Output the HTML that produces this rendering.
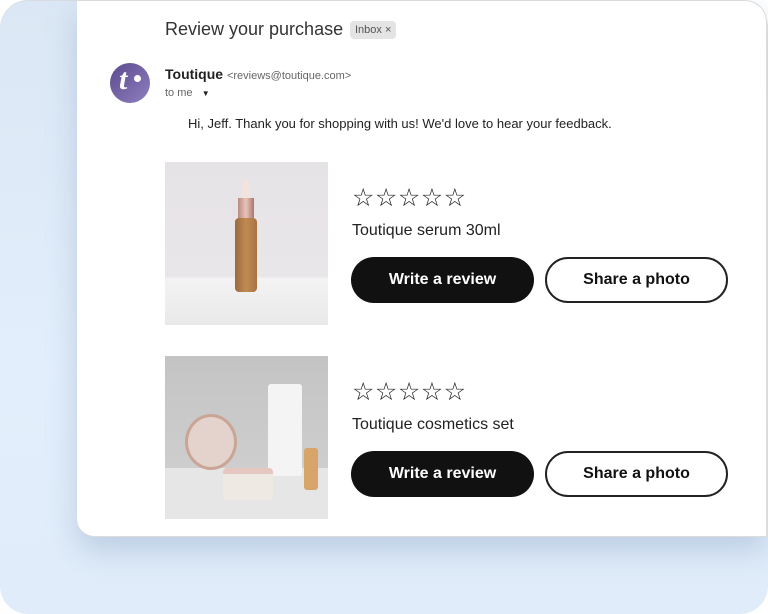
<!DOCTYPE html>
<html><head><style>
*{margin:0;padding:0;box-sizing:border-box}
body{width:768px;height:614px;background:#fff;position:relative;overflow:hidden;font-family:"Liberation Sans",sans-serif}
.bg{position:absolute;left:0;top:0;width:768px;height:614px;border-radius:28px;background:linear-gradient(180deg,#dbe7f4 0%,#e2eefb 60%,#e0ecf9 100%);border-top:1px solid #d8dde3}
.card{position:absolute;left:77px;top:0;width:690px;height:537px;background:#fff;border-radius:0 22px 0 18px;border:1px solid #dcdcdc;border-left:none;box-shadow:0 14px 30px rgba(120,150,190,.35)}
.t{position:absolute;white-space:nowrap}
.btn{position:absolute;height:46px;border-radius:23px;font-size:16px;font-weight:bold;display:flex;align-items:center;justify-content:center}
.bk{background:#111;color:#fff;width:183px}
.wh{background:#fff;color:#111;border:2px solid #222;width:183px}
.stars{position:absolute;font-size:25px;letter-spacing:0.5px;color:#222;font-family:"DejaVu Sans",sans-serif}
</style></head><body>
<div class="bg"></div>
<div class="card"></div>
<div class="t" style="left:165px;top:19px;font-size:18px;color:#333">Review your purchase</div>
<div class="t" style="left:350px;top:21px;height:18px;padding:0 5px;background:#e4e4e4;border-radius:4px;font-size:11px;color:#555;line-height:18px">Inbox&nbsp;×</div>
<div style="position:absolute;left:110px;top:63px;width:40px;height:40px;border-radius:50%;background:linear-gradient(135deg,#5b4a8c,#8f7fc0)"></div>
<div class="t" style="left:119px;top:63px;font-family:'Liberation Serif',serif;font-style:italic;font-weight:bold;color:#fff;font-size:30px">t</div>
<div style="position:absolute;left:134px;top:75px;width:7px;height:7px;border-radius:50%;background:#fff"></div>
<div class="t" style="left:165px;top:66px;font-size:14px;font-weight:bold;color:#222">Toutique <span style="font-weight:normal;font-size:11px;color:#666">&lt;reviews@toutique.com&gt;</span></div>
<div class="t" style="left:165px;top:87px;font-size:11px;color:#666">to me &nbsp;&nbsp;<span style="font-size:8px;color:#222">▼</span></div>
<div class="t" style="left:188px;top:116px;font-size:13px;color:#222">Hi, Jeff. Thank you for shopping with us! We'd love to hear your feedback.</div>

<div style="position:absolute;left:165px;top:162px;width:163px;height:163px;background:linear-gradient(180deg,#e6e3e6 0%,#e9e6e9 70%,#f3f2f3 72%,#e8e8e8 100%);overflow:hidden">
<div style="position:absolute;left:0;top:116px;width:163px;height:47px;background:linear-gradient(180deg,#f4f3f3,#e9e9e9)"></div>
<div style="position:absolute;left:77px;top:18px;width:8px;height:18px;background:#f3e3de;border-radius:4px 4px 0 0"></div>
<div style="position:absolute;left:73px;top:36px;width:16px;height:20px;background:linear-gradient(90deg,#b98a80,#e9c4ba,#a7776d)"></div>
<div style="position:absolute;left:70px;top:56px;width:22px;height:74px;background:linear-gradient(90deg,#9c6a3b,#c08b53,#a87342);border-radius:4px"></div>
</div>
<div class="stars" style="left:352px;top:183px">☆☆☆☆☆</div>
<div class="t" style="left:352px;top:222px;font-size:16px;color:#222">Toutique serum 30ml</div>
<div class="btn bk" style="left:351px;top:257px">Write a review</div>
<div class="btn wh" style="left:545px;top:257px">Share a photo</div>

<div style="position:absolute;left:165px;top:356px;width:163px;height:163px;background:linear-gradient(180deg,#c4c4c4,#d2d2d2);overflow:hidden">
<div style="position:absolute;left:0;top:112px;width:163px;height:51px;background:#e6e6e6"></div>
<div style="position:absolute;left:20px;top:58px;width:52px;height:56px;border-radius:50%;background:#e4d3cc;border:3px solid #c9a596"></div>
<div style="position:absolute;left:103px;top:28px;width:34px;height:92px;background:#f4f4f4;border-radius:3px"></div>
<div style="position:absolute;left:58px;top:112px;width:50px;height:32px;background:#eeeae3;border-radius:4px;border-top:6px solid #e6c6c0"></div>
<div style="position:absolute;left:139px;top:92px;width:14px;height:42px;background:#d7a569;border-radius:3px"></div>
</div>
<div class="stars" style="left:352px;top:377px">☆☆☆☆☆</div>
<div class="t" style="left:352px;top:416px;font-size:16px;color:#222">Toutique cosmetics set</div>
<div class="btn bk" style="left:351px;top:451px">Write a review</div>
<div class="btn wh" style="left:545px;top:451px">Share a photo</div>
</body></html>
